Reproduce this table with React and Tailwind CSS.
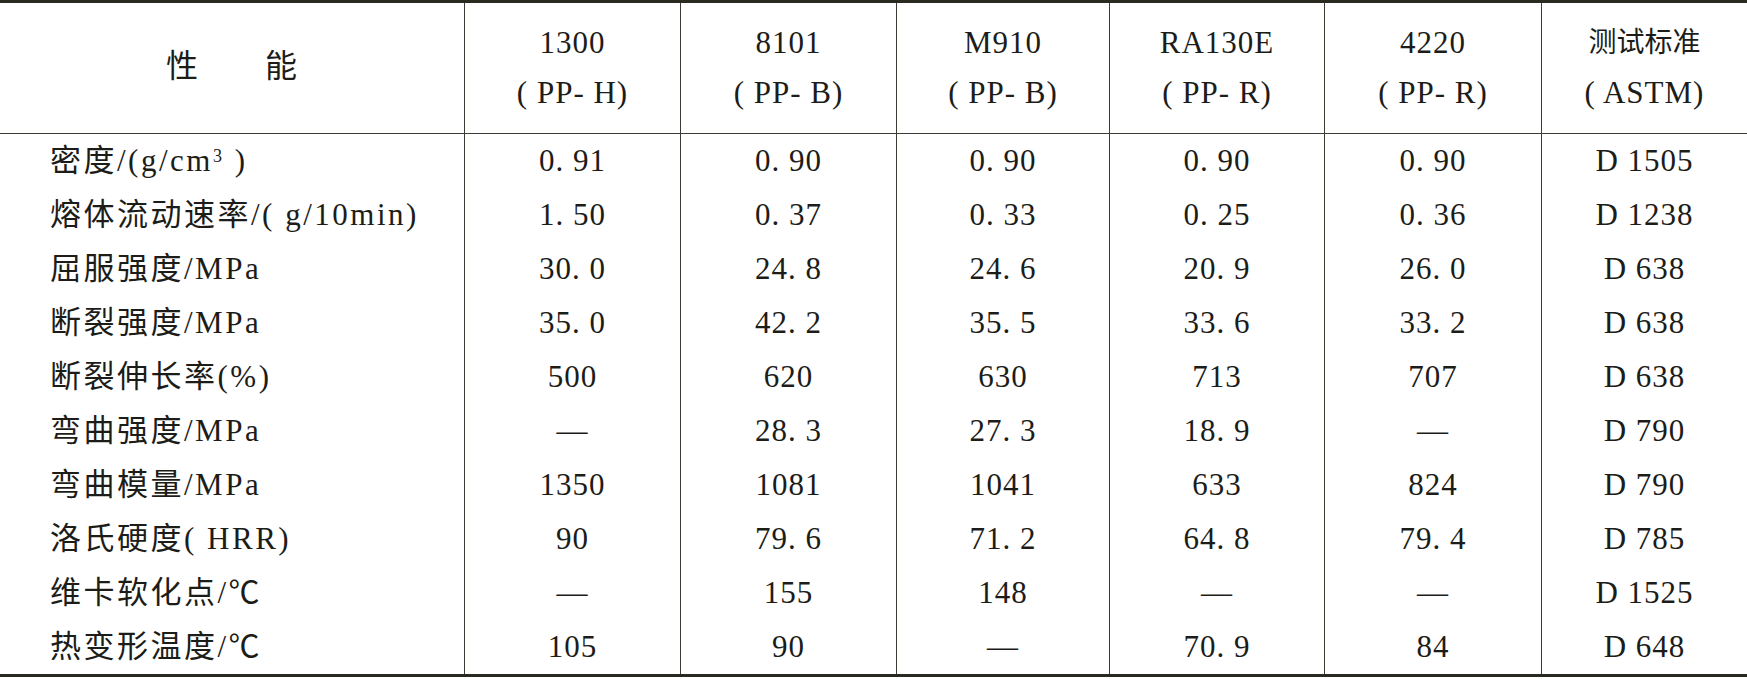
const cols = ["1300", "8101", "M910", "RA130E", "4220"];
const grades = ["( PP- H)", "( PP- B)", "( PP- B)", "( PP- R)", "( PP- R)"];

const rows = [
  { name: "密度/(g/cm", sup: "3", tail: " )", vals: ["0. 91", "0. 90", "0. 90", "0. 90", "0. 90"], std: "D 1505" },
  { name: "熔体流动速率/( g/10min)", vals: ["1. 50", "0. 37", "0. 33", "0. 25", "0. 36"], std: "D 1238" },
  { name: "屈服强度/MPa", vals: ["30. 0", "24. 8", "24. 6", "20. 9", "26. 0"], std: "D 638" },
  { name: "断裂强度/MPa", vals: ["35. 0", "42. 2", "35. 5", "33. 6", "33. 2"], std: "D 638" },
  { name: "断裂伸长率(%)", vals: ["500", "620", "630", "713", "707"], std: "D 638" },
  { name: "弯曲强度/MPa", vals: ["—", "28. 3", "27. 3", "18. 9", "—"], std: "D 790" },
  { name: "弯曲模量/MPa", vals: ["1350", "1081", "1041", "633", "824"], std: "D 790" },
  { name: "洛氏硬度( HRR)", vals: ["90", "79. 6", "71. 2", "64. 8", "79. 4"], std: "D 785" },
  { name: "维卡软化点/℃", vals: ["—", "155", "148", "—", "—"], std: "D 1525" },
  { name: "热变形温度/℃", vals: ["105", "90", "—", "70. 9", "84"], std: "D 648" },
];

const grid = "grid grid-cols-[464px_216px_216px_213px_215px_217px_206px]";
const cell = "flex items-center justify-center border-l border-[#3c3c34] whitespace-pre";

export default function App() {
  return (
    <div className="w-[1747px] h-[679px] bg-white text-[#1c1c18] text-[31px] tracking-[1px] font-[Liberation_Serif,Noto_Sans_CJK_SC,serif]">
      <div className="border-t-[3px] border-b-[3px] border-[#2a2a20]">
        {/* header */}
        <div className={`${grid} h-[131px] border-b border-[#3c3c34]`}>
          <div className="flex items-center justify-center text-[32px] pb-[4px]">
            <span>性</span>
            <span className="inline-block w-[66px]" />
            <span>能</span>
          </div>
          {cols.map((c, i) => (
            <div key={c} className={`${cell} flex-col leading-[50px]`}>
              <div>{c}</div>
              <div>{grades[i]}</div>
            </div>
          ))}
          <div className={`${cell} flex-col leading-[50px]`}>
            <div className="text-[28px] tracking-[0px]">测试标准</div>
            <div>( ASTM)</div>
          </div>
        </div>

        {/* body */}
        {rows.map((r, ri) => (
          <div key={ri} className={`${grid} h-[54px]`}>
            <div className="flex items-center pl-[50px] whitespace-pre tracking-[2.5px]">
              {r.name}
              {r.sup && <sup className="text-[18px] relative -top-[5px]">{r.sup}</sup>}
              {r.tail}
            </div>
            {r.vals.map((v, i) => (
              <div key={i} className={cell}>{v}</div>
            ))}
            <div className={cell}>{r.std}</div>
          </div>
        ))}
      </div>
    </div>
  );
}
